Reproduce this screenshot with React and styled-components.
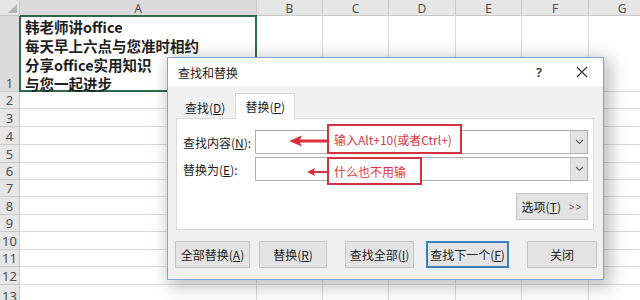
import React from "react";
import styled, { createGlobalStyle } from "styled-components";

const GlobalStyle = createGlobalStyle`
  html, body {
    margin: 0;
    padding: 0;
    background: #fff;
  }
  body {
    font-family: "Noto Sans CJK SC", "Noto Sans", sans-serif;
  }
`;

const Page = styled.div`
  position: relative;
  width: 640px;
  height: 300px;
  overflow: hidden;
  background: #fff;
`;

const Sheet = styled.div`
  display: grid;
  width: max-content;
  grid-template-columns: 20px 237px 66px 66px 67px 66px 67px 67px;
  grid-template-rows: 16px 76px 17px 18px 18px 18px 17px 17px 18px 17px 18px 17px 18px 20px;
`;

const Corner = styled.div`
  position: relative;
  background: #e6e6e6;
  border-right: 1px solid #c8c8c8;
  border-bottom: 1px solid #c8c8c8;
  box-sizing: border-box;

  &::after {
    content: "";
    position: absolute;
    right: 2px;
    bottom: 2px;
    border-left: 9px solid transparent;
    border-bottom: 9px solid #b4b4b4;
  }
`;

const ColHead = styled.div`
  background: ${(p) => (p.$active ? "#dadada" : "#e6e6e6")};
  border-right: 1px solid #c8c8c8;
  border-bottom: 1px solid ${(p) => (p.$active ? "#5b8c6e" : "#c8c8c8")};
  box-sizing: border-box;
  display: flex;
  align-items: center;
  justify-content: center;
  font-family: "Noto Sans", sans-serif;
  font-size: 12px;
  color: #505050;
  padding-top: 1px;
`;

const RowHead = styled.div`
  background: ${(p) => (p.$active ? "#dadada" : "#e6e6e6")};
  border-right: 1px solid #c8c8c8;
  border-bottom: 1px solid #c8c8c8;
  box-sizing: border-box;
  display: flex;
  align-items: flex-end;
  justify-content: center;
  font-family: "Noto Sans", sans-serif;
  font-size: 13px;
  line-height: 16px;
  color: #505050;
`;

const Cell = styled.div`
  border-right: 1px solid #dadada;
  border-bottom: 1px solid #dadada;
  box-sizing: border-box;
  background: #fff;
`;

const ActiveCell = styled(Cell)`
  border: 2px solid #2e6b4a;
  margin: -1px 0 0 -1px;
  padding: 0 0 0 4px;
  font-size: 14.5px;
  font-weight: 700;
  line-height: 19px;
  color: #1e1e1e;
  white-space: nowrap;
`;

const Dialog = styled.div`
  position: absolute;
  left: 167px;
  top: 57px;
  width: 437px;
  height: 223px;
  box-sizing: border-box;
  border: 1px solid #7ba3d6;
  background: #f0f0f0;
  box-shadow: 4px 4px 16px 3px rgba(0, 0, 0, 0.25);
  font-size: 12px;
  color: #1a1a1a;
  display: flex;
  flex-direction: column;
`;

const TitleBar = styled.div`
  height: 28px;
  background: #fff;
  display: flex;
  align-items: center;
  padding-left: 10px;
  font-size: 12px;
`;

const Title = styled.span`
  flex: 1;
`;

const TitleButton = styled.span`
  width: 30px;
  display: flex;
  justify-content: center;
  margin-right: ${(p) => p.$mr || 0}px;
  font-family: "Noto Sans", sans-serif;
  font-size: 13px;
  font-weight: 600;
  color: #333;
`;

const Body = styled.div`
  padding: 7px 9px 0 8px;
`;

const TabList = styled.div`
  display: flex;
  align-items: flex-end;
  height: 25px;
`;

const Tab = styled.div`
  height: ${(p) => (p.$selected ? 26 : 23)}px;
  padding: 0 ${(p) => (p.$selected ? 9 : 8)}px;
  box-sizing: border-box;
  display: flex;
  align-items: center;
  background: ${(p) => (p.$selected ? "#fff" : "transparent")};
  border: 1px solid ${(p) => (p.$selected ? "#d9d9d9" : "transparent")};
  border-bottom: none;
  margin-bottom: ${(p) => (p.$selected ? -1 : 0)}px;
  position: relative;
  z-index: 1;
  margin-left: ${(p) => p.$ml || 0}px;
`;

const Panel = styled.div`
  height: 112px;
  box-sizing: border-box;
  background: #fff;
  border: 1px solid #d9d9d9;
  padding: 11px 5px 0 6px;
  display: flex;
  flex-direction: column;
`;

const FieldRow = styled.div`
  display: flex;
  align-items: center;
  height: 24px;
  margin-bottom: 3px;
`;

const Label = styled.label`
  width: 72px;
`;

const Combo = styled.div`
  flex: 1;
  height: 100%;
  box-sizing: border-box;
  border: 1px solid #abadb3;
  display: flex;
  justify-content: flex-end;
  background: #fff;
`;

const DropButton = styled.div`
  width: 16px;
  background: #e3e3e3;
  border-left: 1px solid #cfcfcf;
  display: flex;
  align-items: center;
  justify-content: center;
`;

const OptionsRow = styled.div`
  display: flex;
  justify-content: flex-end;
  margin-top: 9px;
`;

const Button = styled.div`
  width: ${(p) => p.$w}px;
  height: 27px;
  margin-left: ${(p) => p.$ml || 0}px;
  box-sizing: border-box;
  border: ${(p) => (p.$focus ? "2px solid #3a7fc0" : "1px solid #c4c4c4")};
  background: #e3e3e3;
  display: flex;
  align-items: center;
  justify-content: center;
  font-size: 12px;
  color: #222;
  white-space: nowrap;
`;

const Chevrons = styled.span`
  margin-left: 8px;
  font-family: "Noto Sans", sans-serif;
  font-size: 10px;
  color: #555;
  letter-spacing: 1px;
`;

const ButtonRow = styled.div`
  display: flex;
  padding: 11px 0 0 7px;
`;

const Note = styled.div`
  position: absolute;
  left: ${(p) => p.$x}px;
  top: ${(p) => p.$y}px;
  width: ${(p) => p.$w}px;
  height: ${(p) => p.$h}px;
  box-sizing: border-box;
  border: 2px solid #d4323f;
  background: #fff;
  color: #e0353f;
  font-size: 12px;
  display: flex;
  align-items: center;
  padding-left: 5px;
  white-space: nowrap;
`;

const Arrow = styled.svg`
  position: absolute;
  left: ${(p) => p.$x}px;
  top: ${(p) => p.$y}px;
`;

const rowHeights = [76, 17, 18, 18, 18, 17, 17, 18, 17, 18, 17, 18, 20];
const cols = ["A", "B", "C", "D", "E", "F", "G"];

function Chevron() {
  return (
    <svg width="9" height="6" viewBox="0 0 9 6">
      <path d="M1 1 L4.5 4.5 L8 1" fill="none" stroke="#606060" strokeWidth="1.2" />
    </svg>
  );
}

function Close() {
  return (
    <svg width="12" height="12" viewBox="0 0 12 12">
      <path d="M1 1 L11 11 M11 1 L1 11" stroke="#333" strokeWidth="1.2" />
    </svg>
  );
}

export default function App() {
  return (
    <Page>
      <GlobalStyle />
      <Sheet>
        <Corner />
        {cols.map((c) => (
          <ColHead key={c} $active={c === "A"}>
            {c}
          </ColHead>
        ))}
        {rowHeights.map((h, r) => (
          <React.Fragment key={r}>
            <RowHead $active={r === 0}>{r + 1}</RowHead>
            {cols.map((c, i) =>
              r === 0 && i === 0 ? (
                <ActiveCell key={c}>
                  韩老师讲office
                  <br />
                  每天早上六点与您准时相约
                  <br />
                  分享office实用知识
                  <br />
                  与您一起进步
                </ActiveCell>
              ) : (
                <Cell key={c} />
              )
            )}
          </React.Fragment>
        ))}
      </Sheet>

      <Dialog>
        <TitleBar>
          <Title>查找和替换</Title>
          <TitleButton $mr={13}>?</TitleButton>
          <TitleButton $mr={6}>
            <Close />
          </TitleButton>
        </TitleBar>
        <Body>
          <TabList>
            <Tab>
              查找(<u>D</u>)
            </Tab>
            <Tab $selected $ml={1}>
              替换(<u>P</u>)
            </Tab>
          </TabList>
          <Panel>
            <FieldRow>
              <Label>
                查找内容(<u>N</u>):
              </Label>
              <Combo>
                <DropButton>
                  <Chevron />
                </DropButton>
              </Combo>
            </FieldRow>
            <FieldRow>
              <Label>
                替换为(<u>E</u>):
              </Label>
              <Combo>
                <DropButton>
                  <Chevron />
                </DropButton>
              </Combo>
            </FieldRow>
            <OptionsRow>
              <Button $w={72}>
                选项(<u>T</u>)<Chevrons>&gt;&gt;</Chevrons>
              </Button>
            </OptionsRow>
          </Panel>
        </Body>
        <ButtonRow>
          <Button $w={75}>
            全部替换(<u>A</u>)
          </Button>
          <Button $w={68} $ml={9}>
            替换(<u>R</u>)
          </Button>
          <Button $w={69} $ml={18}>
            查找全部(<u>I</u>)
          </Button>
          <Button $w={83} $ml={12} $focus>
            查找下一个(<u>F</u>)
          </Button>
          <Button $w={70} $ml={18}>
            关闭
          </Button>
        </ButtonRow>
      </Dialog>

      <Arrow $x={288} $y={134} width="40" height="14" viewBox="0 0 40 14">
        <path d="M1 7 L14 1.5 L12 5.5 L39 5.5 L39 8.5 L12 8.5 L14 12.5 Z" fill="#dc2f3c" />
      </Arrow>
      <Note $x={327} $y={124} $w={135} $h={30}>
        输入Alt+10(或者Ctrl+)
      </Note>

      <Arrow $x={306} $y={167} width="22" height="10" viewBox="0 0 22 10">
        <path d="M1 5 L9 1 L8 4 L21 4 L21 6 L8 6 L9 9 Z" fill="#dc2f3c" />
      </Arrow>
      <Note $x={327} $y={157} $w={95} $h={28}>
        什么也不用输
      </Note>
    </Page>
  );
}
